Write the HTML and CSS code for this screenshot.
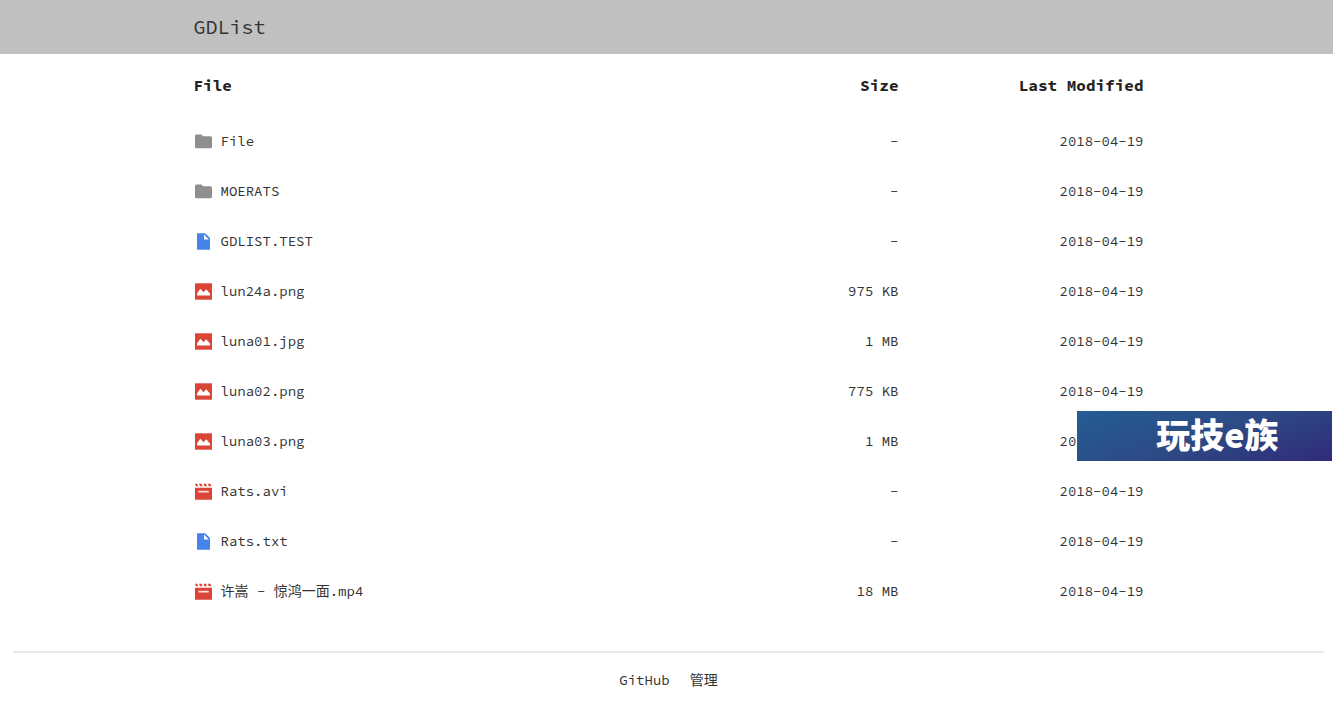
FILE: index.html
```
<!DOCTYPE html>
<html lang="zh-CN">
<head>
<meta charset="utf-8">
<meta name="viewport" content="width=device-width, initial-scale=1">
<title>GDList</title>
<link rel="stylesheet" href="styles.css">
</head>
<body>
<svg class="sprite" aria-hidden="true">
  <symbol id="folder" viewBox="0 0 17 17"><path fill="#8f8f8f" d="M1.500 1.500h5l1.600 1.700h7.400A1.500 1.500 0 0 1 17 4.700v9.100a1.500 1.500 0 0 1-1.500 1.500h-14A1.500 1.500 0 0 1 0 13.800V3A1.500 1.500 0 0 1 1.500 1.500z"/></symbol>
  <symbol id="doc" viewBox="0 0 17 17"><path fill="#4683ea" d="M2 .3h8.200L15 5v11.800H2z"/><path fill="#fff" d="M9 1.600v4.800h4.800z"/></symbol>
  <symbol id="image" viewBox="0 0 17 17"><path fill="#db4437" d="M0 .3h17v16.400H0z"/><path fill="#fff" d="M2 12.500V10.400L5.300 5.700 8.500 9.300 11.200 6.300 15 10.600v1.900z"/></symbol>
  <symbol id="video" viewBox="0 0 17 17"><path fill="#db4437" d="M0 4.800h17v11.900H0zM0 .7h2.200l1.200 2.600H1zM4 .7h2.600l1 2.600H5zM8.400.7H11l1 2.600H9.400zM12.800.7h2.600l1 2.600h-2.600z"/><path fill="#fff" fill-opacity=".85" d="M3.500 7.800h10.200v1.700H3.500z"/></symbol>
</svg>

<header class="topbar">
  <a class="brand" href="#">GDList</a>
</header>

<main class="page">
  <table class="files">
    <thead>
      <tr><th class="col-name" scope="col">File</th><th class="col-size" scope="col">Size</th><th class="col-date" scope="col">Last Modified</th></tr>
    </thead>
    <tbody>
      <tr><td><a class="entry" href="#"><svg class="icon"><use href="#folder"/></svg>File</a></td><td>-</td><td>2018-04-19</td></tr>
      <tr><td><a class="entry" href="#"><svg class="icon"><use href="#folder"/></svg>MOERATS</a></td><td>-</td><td>2018-04-19</td></tr>
      <tr><td><a class="entry" href="#"><svg class="icon"><use href="#doc"/></svg>GDLIST.TEST</a></td><td>-</td><td>2018-04-19</td></tr>
      <tr><td><a class="entry" href="#"><svg class="icon"><use href="#image"/></svg>lun24a.png</a></td><td>975 KB</td><td>2018-04-19</td></tr>
      <tr><td><a class="entry" href="#"><svg class="icon"><use href="#image"/></svg>luna01.jpg</a></td><td>1 MB</td><td>2018-04-19</td></tr>
      <tr><td><a class="entry" href="#"><svg class="icon"><use href="#image"/></svg>luna02.png</a></td><td>775 KB</td><td>2018-04-19</td></tr>
      <tr><td><a class="entry" href="#"><svg class="icon"><use href="#image"/></svg>luna03.png</a></td><td>1 MB</td><td>2018-04-19</td></tr>
      <tr><td><a class="entry" href="#"><svg class="icon"><use href="#video"/></svg>Rats.avi</a></td><td>-</td><td>2018-04-19</td></tr>
      <tr><td><a class="entry" href="#"><svg class="icon"><use href="#doc"/></svg>Rats.txt</a></td><td>-</td><td>2018-04-19</td></tr>
      <tr><td><a class="entry" href="#"><svg class="icon"><use href="#video"/></svg>许嵩 - 惊鸿一面.mp4</a></td><td>18 MB</td><td>2018-04-19</td></tr>
    </tbody>
  </table>
</main>

<footer class="footer">
  <a href="#">GitHub</a>
  <a href="#">管理</a>
</footer>

<aside class="banner">玩技e族</aside>
</body>
</html>
```

FILE: styles.css
```
* {
  box-sizing: border-box;
}

body {
  margin: 0;
  background: #fff;
  color: #333;
  font: 14px/20px "Source Code Pro", "Liberation Mono", "Noto Sans CJK SC", monospace;
}

a {
  color: inherit;
  text-decoration: none;
}

.sprite {
  display: none;
}

.topbar {
  padding: 12px 9px 12px 13px;
  background: #c0c0c0;
}

.brand {
  display: block;
  max-width: 950px;
  margin: 0 auto;
  font-size: 20px;
  line-height: 30px;
}

.page {
  padding: 0 9px 0 13px;
}

.files {
  width: 100%;
  max-width: 950px;
  margin: 0 auto;
  table-layout: fixed;
  border-collapse: collapse;
}

.files th,
.files td {
  height: 50px;
  padding: 0;
  text-align: right;
  white-space: nowrap;
}

.files th {
  height: 62px;
  color: #222;
  font-size: 16px;
}

.files th:first-child,
.files td:first-child {
  text-align: left;
}

.col-size {
  width: 160px;
}

.col-date {
  width: 245px;
}

.entry {
  display: flex;
  align-items: center;
  gap: 9px;
  padding-left: 1px;
}

.icon {
  flex: none;
  width: 17px;
  height: 17px;
}

.footer {
  display: flex;
  justify-content: center;
  gap: 20px;
  margin: 35px 9px 0 13px;
  padding: 17px 0 30px;
  border-top: 2px solid #e9e9e9;
}

.banner {
  position: absolute;
  top: 411px;
  right: 1px;
  width: 255px;
  height: 50px;
  padding-left: 26px;
  background: linear-gradient(160deg, #235d94 0%, #2d4a86 50%, #302a78 100%);
  color: #fff;
  font-family: "Noto Sans CJK SC", sans-serif;
  font-size: 34px;
  font-weight: 900;
  line-height: 46px;
  text-align: center;
}
```
